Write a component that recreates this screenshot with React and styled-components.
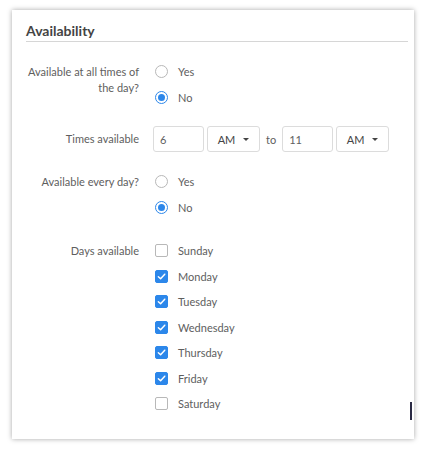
import React from "react";
import styled, { createGlobalStyle } from "styled-components";

const GlobalStyle = createGlobalStyle`
  html, body {
    margin: 0;
    padding: 0;
    background: #fff;
  }
  body {
    font-family: Lato, "Liberation Sans", sans-serif;
  }
`;

const DAYS = [
  { name: "Sunday", checked: false },
  { name: "Monday", checked: true },
  { name: "Tuesday", checked: true },
  { name: "Wednesday", checked: true },
  { name: "Thursday", checked: true },
  { name: "Friday", checked: true },
  { name: "Saturday", checked: false },
];

const Radio = ({ checked, label }) => (
  <Option>
    <RadioDot $checked={checked} />
    <OptionText>{label}</OptionText>
  </Option>
);

const Checkbox = ({ checked, label }) => (
  <Option>
    <Box $checked={checked}>
      {checked && (
        <svg width="9" height="9" viewBox="0 0 10 10">
          <path d="M1.5 5.2 L4 7.6 L8.6 2.4" fill="none" stroke="#fff" strokeWidth="1.6" strokeLinecap="round" strokeLinejoin="round" />
        </svg>
      )}
    </Box>
    <OptionText>{label}</OptionText>
  </Option>
);

const Select = ({ value }) => (
  <SelectBox>
    <span>{value}</span>
    <Caret />
  </SelectBox>
);

const App = () => {
  return (
    <>
      <GlobalStyle />
      <Page>
        <Card>
          <Title>Availability</Title>
          <Form>
            <Field>
              <Label>
                Available at all times of
                <br />
                the day?
              </Label>
              <Options>
                <Radio label="Yes" />
                <Radio label="No" checked />
              </Options>
            </Field>

            <Field $gap={16}>
              <Label>Times available</Label>
              <TimeRow>
                <TextInput>6</TextInput>
                <Select value="AM" />
                <To>to</To>
                <TextInput>11</TextInput>
                <Select value="AM" />
              </TimeRow>
            </Field>

            <Field $gap={17}>
              <Label>Available every day?</Label>
              <Options>
                <Radio label="Yes" />
                <Radio label="No" checked />
              </Options>
            </Field>

            <Field $gap={18}>
              <Label>Days available</Label>
              <Options>
                {DAYS.map((d) => (
                  <Checkbox key={d.name} label={d.name} checked={d.checked} />
                ))}
              </Options>
            </Field>
          </Form>
          <TextCursor />
        </Card>
      </Page>
    </>
  );
};

export default App;

const Page = styled.div`
  width: 427px;
  height: 452px;
  padding: 10px 0 0 12px;
  box-sizing: border-box;
`;

const Card = styled.section`
  position: relative;
  width: 402px;
  height: 429px;
  box-sizing: border-box;
  padding: 14px 6px 0 14px;
  background: #fff;
  box-shadow: 0 0 5px rgba(0, 0, 0, 0.35);
`;

const Title = styled.h2`
  margin: 0;
  padding-bottom: 3px;
  font-size: 14px;
  line-height: 14px;
  font-weight: 700;
  color: #444;
  border-bottom: 1px solid #d6d6d6;
`;

const Form = styled.div`
  display: flex;
  flex-direction: column;
  padding-top: 17px;
`;

const Field = styled.div`
  display: grid;
  grid-template-columns: 113px 1fr;
  column-gap: 14px;
  margin-top: ${(p) => p.$gap || 0}px;
`;

const Label = styled.div`
  padding-top: 5px;
  text-align: right;
  font-size: 11px;
  line-height: 16px;
  color: #5e5e5e;
`;

const Options = styled.div`
  display: flex;
  flex-direction: column;
`;

const Option = styled.div`
  display: flex;
  align-items: center;
  height: 25.5px;
  padding-left: 2px;
`;

const OptionText = styled.span`
  margin-left: 10px;
  font-size: 11px;
  color: #5e5e5e;
`;

const RadioDot = styled.span`
  position: relative;
  width: 13px;
  height: 13px;
  box-sizing: border-box;
  border-radius: 50%;
  border: ${(p) => (p.$checked ? "1.5px solid #2c87ea" : "1px solid #b8b8b8")};
  background: #fff;

  &::after {
    content: "";
    display: ${(p) => (p.$checked ? "block" : "none")};
    position: absolute;
    inset: 2px;
    border-radius: 50%;
    background: #2c87ea;
  }
`;

const Box = styled.span`
  display: flex;
  align-items: center;
  justify-content: center;
  width: 13px;
  height: 13px;
  box-sizing: border-box;
  border-radius: 2px;
  border: 1px solid ${(p) => (p.$checked ? "#2c87ea" : "#b8b8b8")};
  background: ${(p) => (p.$checked ? "#2c87ea" : "#fff")};
`;

const TimeRow = styled.div`
  display: flex;
  align-items: center;
  gap: 3px;
`;

const TextInput = styled.div`
  width: 51px;
  height: 26px;
  box-sizing: border-box;
  padding-left: 6px;
  display: flex;
  align-items: center;
  font-size: 11px;
  color: #5e5e5e;
  border: 1px solid #dcdcdc;
  border-radius: 3px;
`;

const SelectBox = styled.div`
  width: 53px;
  height: 26px;
  box-sizing: border-box;
  display: flex;
  align-items: center;
  justify-content: center;
  gap: 8px;
  font-size: 11px;
  color: #444;
  border: 1px solid #dcdcdc;
  border-radius: 3px;
`;

const Caret = styled.span`
  width: 0;
  height: 0;
  border-left: 3px solid transparent;
  border-right: 3px solid transparent;
  border-top: 3px solid #444;
`;

const To = styled.span`
  margin: 0 3px;
  font-size: 11px;
  color: #5e5e5e;
`;

const TextCursor = styled.span`
  position: absolute;
  right: 2px;
  top: 392px;
  width: 2px;
  height: 18px;
  background: #2b2b45;
`;
